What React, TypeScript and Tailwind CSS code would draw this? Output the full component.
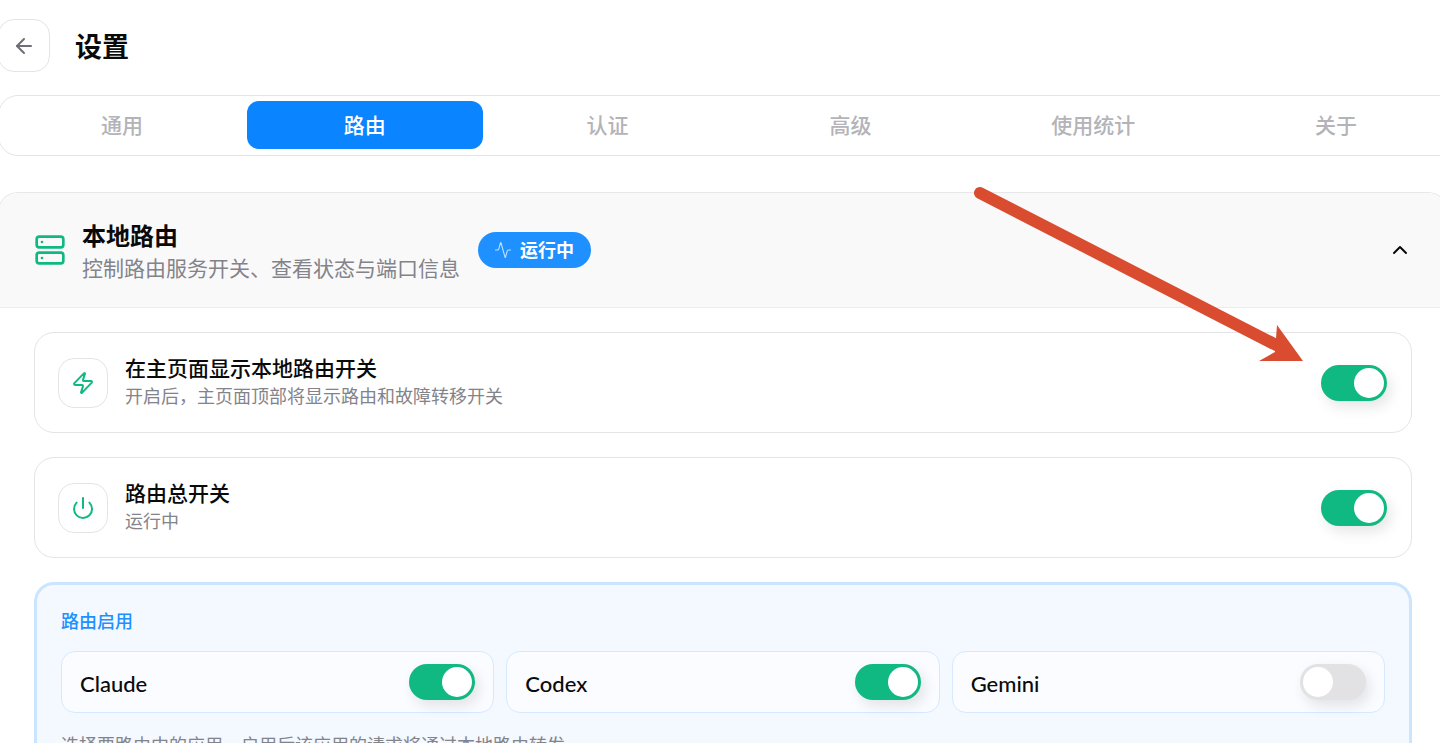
import { ArrowLeft, Server, Activity, ChevronUp, Zap, Power } from "lucide-react";
import type { ReactNode } from "react";

const FONT = 'font-["Noto_Sans_CJK_SC","Noto_Sans",sans-serif]';

function Toggle({ on = true }: { on?: boolean }) {
  return (
    <div
      className={`flex h-[36px] w-[66px] shrink-0 items-center rounded-full px-[3px] shadow-[4px_6px_14px_rgba(0,0,0,0.10)] ${
        on ? "justify-end bg-[#10b981]" : "justify-start bg-[#e2e2e4]"
      }`}
    >
      <div className="h-[30px] w-[30px] rounded-full bg-white" />
    </div>
  );
}

function Row({ icon, title, sub, mb }: { icon: ReactNode; title: string; sub: string; mb: string }) {
  return (
    <div className={`flex h-[101px] items-center justify-between rounded-[20px] border border-[#e4e4e6] bg-white pl-[23px] pr-[24px] ${mb}`}>
      <div className="flex items-center gap-[17px]">
        <div className="flex h-[50px] w-[50px] items-center justify-center rounded-[16px] border border-[#e4e4e6] text-[#10b981]">
          {icon}
        </div>
        <div className="flex flex-col pb-[6px]">
          <div className="text-[21px] font-medium leading-[30px] text-[#0a0a0a]">{title}</div>
          <div className="text-[18px] leading-[26px] text-[#83838a]">{sub}</div>
        </div>
      </div>
      <Toggle />
    </div>
  );
}

function AppCard({ name, on = true }: { name: string; on?: boolean }) {
  return (
    <div className="flex h-[62px] items-center justify-between rounded-[14px] border border-[#d6e9ff] bg-[#fafcff] pl-[18px] pr-[18px]">
      <span className='pt-[3px] font-["Lato","Noto_Sans",sans-serif] text-[22px] font-medium leading-none text-[#0a0a0a]'>{name}</span>
      <Toggle on={on} />
    </div>
  );
}

const TABS = ["通用", "路由", "认证", "高级", "使用统计", "关于"];

export default function App() {
  return (
    <div className={`relative h-[743px] w-[1440px] overflow-hidden bg-white ${FONT}`}>
      <div className="-ml-[2px] w-[1450px]">
        <div className="flex items-center gap-[25px] pt-[19px]">
          <button className="flex h-[53px] w-[52px] items-center justify-center rounded-[16px] border border-[#e4e4e6] text-[#6e6e76]">
            <ArrowLeft size={24} strokeWidth={2} />
          </button>
          <h1 className="text-[27px] font-bold leading-none text-[#0a0a0a]">设置</h1>
        </div>

        <div className="mt-[23px] flex h-[61px] w-[1466px] items-start gap-[6.8px] rounded-[20px] border border-[#e4e4e6] bg-white pl-[5px] pt-[5px]">
          {TABS.map((t, i) => (
            <div
              key={t}
              className={`flex h-[48px] w-[236px] shrink-0 items-center justify-center rounded-[12px] text-[21px] font-medium ${
                i === 1 ? "bg-[#0a84ff] text-white font-bold" : "text-[#b3b3b8]"
              }`}
            >
              {t}
            </div>
          ))}
        </div>

        <div className="mt-[36px] rounded-t-[20px] border border-b-0 border-[#e8e8ea]">
          <div className="flex h-[115px] items-center justify-between rounded-t-[20px] border-b border-[#ececee] bg-[#f9f9f9] pl-[35px] pr-[35px]">
            <div className="flex items-center gap-[16px]">
              <Server size={32} strokeWidth={2} className="text-[#10b981]" />
              <div className="flex flex-col">
                <div className="text-[24px] font-semibold leading-[34px] text-[#0a0a0a]">本地路由</div>
                <div className="text-[21px] leading-[31px] text-[#83838a]">控制路由服务开关、查看状态与端口信息</div>
              </div>
              <div className="-mt-[1px] ml-[2px] flex h-[36px] items-center gap-[8px] rounded-full bg-[#1e90ff] pl-[16px] pr-[17px] text-[18px] font-bold text-white">
                <Activity size={18} strokeWidth={1.5} className="text-[#bfe0ff]" />
                运行中
              </div>
            </div>
            <ChevronUp size={24} strokeWidth={2} className="text-[#0a0a0a]" />
          </div>

          <div className="px-[35px] pt-[24px]">
            <Row mb="mb-[24px]" icon={<Zap size={24} strokeWidth={2} />} title="在主页面显示本地路由开关" sub="开启后，主页面顶部将显示路由和故障转移开关" />
            <Row mb="mb-[24px]" icon={<Power size={24} strokeWidth={2} />} title="路由总开关" sub="运行中" />

            <div className="rounded-[20px] border-[3px] border-[#cbe5ff] bg-[#f4f8ff] px-[24px] pt-[22px] pb-[24px]">
              <div className="text-[18px] font-medium leading-[26px] text-[#1e90ff]">路由启用</div>
              <div className="mt-[18px] grid grid-cols-3 gap-[12px]">
                <AppCard name="Claude" />
                <AppCard name="Codex" />
                <AppCard name="Gemini" on={false} />
              </div>
              <div className="mt-[18px] text-[18px] leading-[26px] text-[#83838a]">选择要路由中的应用，启用后该应用的请求将通过本地路由转发</div>
            </div>
          </div>
        </div>
      </div>

      <svg className="absolute left-0 top-0" width="1440" height="743" viewBox="0 0 1440 743" fill="none">
        <path d="M980 193 L1280 347" stroke="#d94c2f" strokeWidth="12" strokeLinecap="round" />
        <path d="M1277 325 L1303 361 L1259 361 L1275 352 Z" fill="#d94c2f" />
      </svg>
    </div>
  );
}
